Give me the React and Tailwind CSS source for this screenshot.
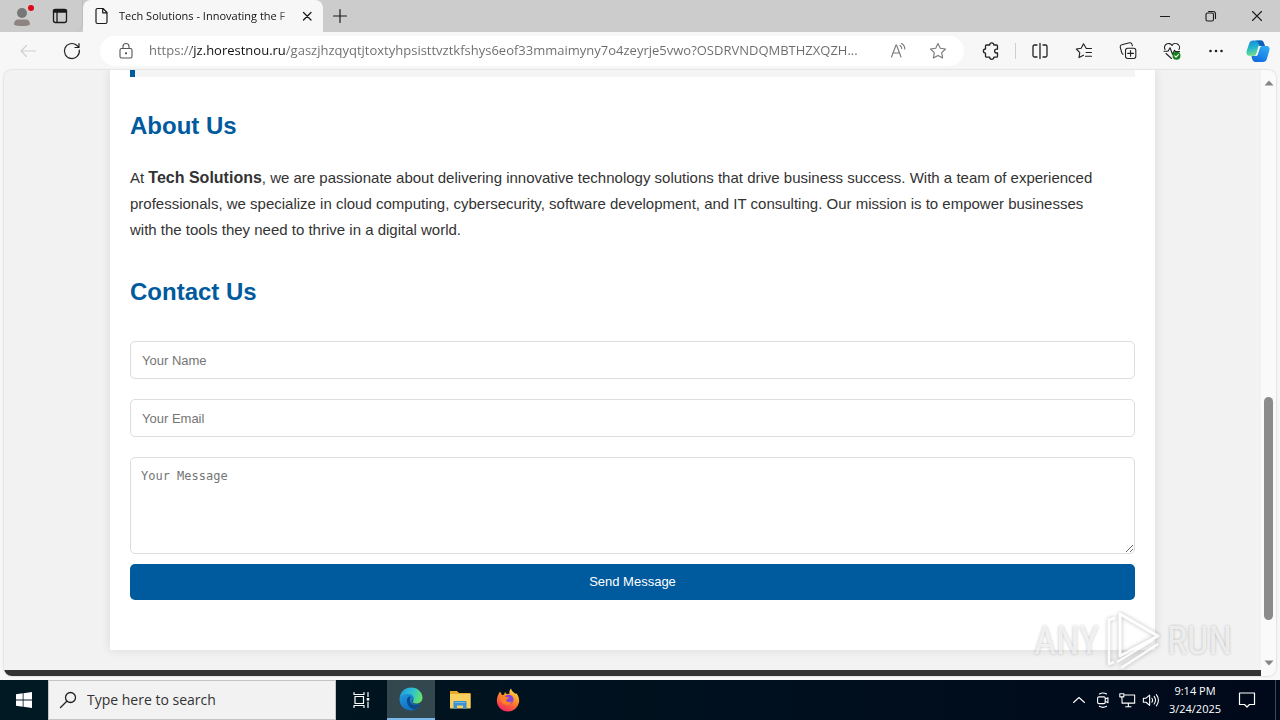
import React from "react";

function Icon({ children, className = "size-5", box = "0 0 20 20", sw = 1.1 }) {
  return (
    <svg viewBox={box} className={className} fill="none" stroke="currentColor" strokeWidth={sw} strokeLinecap="round" strokeLinejoin="round" aria-hidden="true">
      {children}
    </svg>
  );
}

function IconButton({ label, className = "", children }) {
  return (
    <button type="button" aria-label={label} className={`flex shrink-0 items-center justify-center ${className}`}>
      {children}
    </button>
  );
}

function TitleBar() {
  return (
    <header className="flex h-8 shrink-0 bg-[#cccccc] text-[#1b1b1b]">
      <div className="flex w-[83px] shrink-0 items-center rounded-br-lg border-r border-[#bdbdbd]">
        <IconButton label="Profile" className="ml-3 size-5">
          <svg viewBox="0 0 20 24" className="h-6 w-5 overflow-visible" aria-hidden="true">
            <circle cx="10" cy="9" r="5" fill="#777" />
            <path d="M2 20.500c0-3.500 2-5 4-5h8c2 0 4 1.500 4 5-2 2-14 2-16 0Z" fill="#8e8583" />
            <circle cx="19" cy="4" r="3" fill="#dc0a16" />
          </svg>
        </IconButton>
        <IconButton label="Tab actions" className="ml-[18px] size-5">
          <Icon sw={1.3}>
            <rect x="3.500" y="3.500" width="13" height="13" rx="2" />
            <path d="M3.500 6h13M7 6v10" />
            <path d="M4 4.800h12" strokeWidth="2.400" />
          </Icon>
        </IconButton>
      </div>
      <div className="flex w-60 shrink-0 items-center rounded-t-lg bg-[#f7f7f7] pl-[9px] pr-1.5">
        <Icon className="size-5" sw={1.2}>
          <path d="M5.500 2.500h5.500l4 4v9.500a1.500 1.500 0 0 1-1.500 1.500h-8A1.500 1.500 0 0 1 4 16V4a1.500 1.500 0 0 1 1.500-1.500ZM10.700 2.800v4h4" />
        </Icon>
        <span className="ml-[7px] min-w-0 flex-1 whitespace-nowrap bg-linear-to-r from-[#111] from-90% to-[#ccc] bg-clip-text text-[11px] text-transparent">
          Tech Solutions - Innovating the F
        </span>
        <IconButton label="Close tab" className="ml-1 size-5">
          <Icon sw={1.3}><path d="m6.500 6.500 7.500 7.500M14 6.500 6.500 14" /></Icon>
        </IconButton>
      </div>
      <IconButton label="New tab" className="w-[34px]">
        <Icon sw={1.2}><path d="M10 3.500v13M3.500 10h13" /></Icon>
      </IconButton>
      <div className="flex-1" />
      <IconButton label="Minimize" className="w-[46px]">
        <Icon><path d="M5.500 10.500h9" /></Icon>
      </IconButton>
      <IconButton label="Restore" className="w-[46px]">
        <Icon><rect x="5" y="7" width="7.500" height="8" rx="1.500" /><path d="M7.500 5.500H12a2.500 2.500 0 0 1 2.500 2.500v4.500" /></Icon>
      </IconButton>
      <IconButton label="Close" className="w-[46px]">
        <Icon><path d="m5.500 5.500 9 9M14.500 5.500l-9 9" /></Icon>
      </IconButton>
    </header>
  );
}

function Toolbar() {
  return (
    <nav className="flex h-[38px] shrink-0 items-center bg-[#f7f7f7] text-[#222]">
      <IconButton label="Back" className="ml-[18px] size-5 text-[#cfcfcf]">
        <Icon><path d="M17.500 10H3M8.500 4.500 3 10l5.500 5.500" /></Icon>
      </IconButton>
      <IconButton label="Refresh" className="ml-6 size-5">
        <Icon sw={1.2}><path d="M17.300 9A7.500 7.500 0 1 1 14.700 4.300l2 1.800M17 2.500v4h-4" /></Icon>
      </IconButton>
      <div className="ml-[18px] flex h-[30px] min-w-0 flex-1 items-center rounded-full bg-white pl-4 pr-4">
        <Icon className="size-5 shrink-0 text-[#555]">
          <rect x="4" y="7.500" width="12" height="9.500" rx="1.500" />
          <path d="M7 7.500V5.500a3 3 0 0 1 6 0v2" />
          <circle cx="10" cy="12.300" r=".6" fill="currentColor" />
        </Icon>
        <input
          aria-label="Address"
          type="text"
          defaultValue="https://jz.horestnou.ru/gaszjhzqyqtjtoxtyhpsisttvztkfshys6eof33mmaimyny7o4zeyrje5vwo?OSDRVNDQMBTHZXQZH..."
          className="ml-[13px] min-w-0 flex-1 bg-[linear-gradient(90deg,#6b6b6b_43px,#111_43px,#111_137px,#6b6b6b_137px)] bg-clip-text text-[13px] text-transparent outline-none"
        />
        <IconButton label="Read aloud" className="ml-[18px] size-5 text-[#777]">
          <Icon><path d="m3.500 16 4.500-12h.5L13 16M5 12h6.500M12 4.500c1 .6 1.700 1.800 1.700 3M13.500 2.500c2 1 3.300 3 3.300 5.500" /></Icon>
        </IconButton>
        <IconButton label="Add to favorites" className="ml-5 size-5 text-[#777]">
          <Icon><path d="m10 2.500 2.300 4.800 5.200.7-3.800 3.700.9 5.200L10 14.400l-4.600 2.500.9-5.200L2.500 8l5.200-.7Z" /></Icon>
        </IconButton>
      </div>
      <IconButton label="Extensions" className="ml-[17px] size-5">
        <Icon sw={1.3}><path d="M5.500 4h3.200a2.100 2.100 0 0 1 4.200 0h2.600a1 1 0 0 1 1 1v3.200h-1a1.900 1.900 0 0 0 0 3.800h1v3.200a1 1 0 0 1-1 1h-2.600a2.100 2.100 0 0 1-4.200 0H5.500a1 1 0 0 1-1-1V12.200a2.100 2.100 0 0 1 0-4.200V5a1 1 0 0 1 1-1Z" /></Icon>
      </IconButton>
      <div className="ml-[14px] h-4 w-px bg-[#cfcfcf]" />
      <IconButton label="Split screen" className="ml-[14px] size-5">
        <Icon sw={1.3}><path d="M10 2.500v15M7 4H4.500A1.500 1.500 0 0 0 3 5.500v9A1.500 1.500 0 0 0 4.500 16H7M13 4h2.500A1.500 1.500 0 0 1 17 5.500v9a1.500 1.500 0 0 1-1.500 1.500H13" /></Icon>
      </IconButton>
      <IconButton label="Favorites" className="ml-6 size-5">
        <Icon><path d="M17.500 7.500h-5.200L9.500 2.800 7.200 7.300l-4.900.7 3.500 3.600-.8 5 4.500-2.400M12 11.500h5.500M11.500 15.300h6" /></Icon>
      </IconButton>
      <IconButton label="Collections" className="ml-6 size-5">
        <Icon><rect x="7.500" y="7.200" width="10.300" height="10.300" rx="2.200" /><path d="M12.600 9.500v5.800M9.700 12.400h5.800M5 13.300a2.500 2.500 0 0 1-1.300-1.600L2.300 6.300a2 2 0 0 1 1.500-2.500l7.700-2a2 2 0 0 1 2.400 1.400l.5 1.600" /></Icon>
      </IconButton>
      <IconButton label="Browser essentials" className="ml-6 size-5">
        <Icon>
          <path d="M3 8.500a4 4 0 0 1 7-4 4 4 0 0 1 7 4M4 12.500l5.500 5M2 10.300h4l2-3.500 2.500 6.500 2-4 1 1.300h4" />
          <circle cx="14.500" cy="14.700" r="4" fill="#16801d" stroke="none" />
          <path d="m12.700 14.900 1.300 1.200 2.400-2.500" stroke="white" />
        </Icon>
      </IconButton>
      <IconButton label="More" className="ml-6 size-5">
        <Icon><g fill="currentColor" stroke="none"><circle cx="4.500" cy="10" r="1.300" /><circle cx="10" cy="10" r="1.300" /><circle cx="15.500" cy="10" r="1.300" /></g></Icon>
      </IconButton>
      <IconButton label="Copilot" className="ml-5 mr-[10px] size-6">
        <svg viewBox="0 0 24 24" className="size-6" aria-hidden="true">
          <defs>
            <linearGradient id="cpA" x1="0" y1="0" x2=".2" y2="1"><stop offset="0" stopColor="#1a86d9" /><stop offset=".5" stopColor="#22b5cf" /><stop offset="1" stopColor="#6fdc8c" /></linearGradient>
            <linearGradient id="cpB" x1=".7" y1="0" x2=".2" y2="1"><stop offset="0" stopColor="#2fa8f4" /><stop offset=".5" stopColor="#1f8aec" /><stop offset="1" stopColor="#1268dc" /></linearGradient>
          </defs>
          <path d="M17 23H9.500c-2 0-2.800-1.500-3.300-3l-.8-3.200H8c2 0 3-1 3.500-3l1.200-4c.6-2 1.500-2.800 3.500-2.800h4.300c3 0 3.500 2.500 2.700 5l-2.400 8c-.8 2.200-1.800 3-3.800 3Z" fill="url(#cpB)" />
          <path d="M7 1.500h8c2 0 2.500 1.500 3 3L19 7h-3c-2 0-3 1-3.500 3l-1 4c-.7 2-1.500 2.800-3.500 2.800H3.500C.5 16.800 0 14 .8 11.500l2.400-7C4 2.300 5 1.500 7 1.500Z" fill="url(#cpA)" />
          <path d="M9 1.500h6c2 0 2.500 1.500 3 3L19 7h-3c-1.500 0-2.500-.2-3-1.500-.7-2-2-4-4-4Z" fill="#135fb8" />
          <path d="M12.500 7H16c-1.200.2-1.800 1-2.300 2.500l-1.700 5.500c-.5 1.500-1.300 2-2.500 2H8c1.300-.2 2-1 2.400-2.400Z" fill="white" />
        </svg>
      </IconButton>
    </nav>
  );
}

function Page() {
  return (
    <div className="flex min-w-0 flex-1 flex-col overflow-hidden bg-[#f2f2f2] font-['Liberation_Sans',Arial,sans-serif] text-[#333]">
      <main className="mx-[106px] bg-white px-5 pb-[50px] shadow-[0_0_10px_rgba(0,0,0,0.1)]">
        <div className="h-[7px] border-l-[5px] border-[#005a9e] bg-[#f4f4f4]" />
        <section className="pt-[30px]">
          <h2 className="text-2xl leading-[38px] font-bold text-[#005a9e]">About Us</h2>
          <p className="mt-5 text-[15px] leading-[26px]">
            At <strong className="text-base leading-[26px]">Tech Solutions</strong>, we are passionate about delivering innovative technology solutions that drive business success. With a team of experienced{" "}
            <br />
            professionals, we specialize in cloud computing, cybersecurity, software development, and IT consulting. Our mission is to empower businesses{" "}
            <br />
            with the tools they need to thrive in a digital world.
          </p>
        </section>
        <section className="pt-[30px]">
          <h2 className="text-2xl leading-[38px] font-bold text-[#005a9e]">Contact Us</h2>
          <form className="mt-[30px] flex flex-col text-[13px]" onSubmit={(e) => e.preventDefault()}>
            <input aria-label="Your Name" type="text" placeholder="Your Name" className="h-[38px] rounded-[5px] border border-[#ddd] px-[11px] placeholder:text-[#757575]" />
            <input aria-label="Your Email" type="email" placeholder="Your Email" className="mt-5 h-[38px] rounded-[5px] border border-[#ddd] px-[11px] placeholder:text-[#757575]" />
            <textarea aria-label="Your Message" placeholder="Your Message" className="mt-5 h-[97px] rounded-[5px] border border-[#ddd] px-[10px] py-[10px] font-['DejaVu_Sans_Mono',monospace] text-xs placeholder:text-[#757575]" />
            <button type="submit" className="mt-[10px] h-9 rounded-[5px] bg-[#005a9e] text-white">Send Message</button>
          </form>
        </section>
      </main>
      <footer className="mt-5 h-10 shrink-0 bg-[#333]" />
    </div>
  );
}

function ScrollBar() {
  return (
    <div className="flex w-[15px] shrink-0 flex-col items-center bg-[#fafafa] py-2" aria-hidden="true">
      <svg viewBox="0 0 10 10" className="size-[10px]" fill="#858585"><path d="M5 2.500 9.500 7.500h-9Z" /></svg>
      <div className="flex min-h-0 w-full flex-1 flex-col items-center pt-[309px] pb-[38px]">
        <div className="w-[9px] flex-1 rounded-full bg-[#8b8b8b]" />
      </div>
      <svg viewBox="0 0 10 10" className="size-[10px]" fill="#858585"><path d="M5 7.500 .5 2.500h9Z" /></svg>
    </div>
  );
}

function Watermark() {
  return (
    <div className="pointer-events-none absolute right-12 bottom-12 flex h-[62px] items-center gap-1.5 font-['Liberation_Sans_Narrow','Roboto_Condensed',Roboto,sans-serif] text-[38px] text-white/70 [text-shadow:0_0_3px_rgba(0,0,0,0.25)]">
      <span>ANY</span>
      <svg viewBox="0 0 56 62" className="h-[62px] w-14 overflow-visible opacity-80 drop-shadow-[0_0_2px_rgba(0,0,0,0.35)]" fill="none" stroke="white" strokeWidth="3" strokeLinejoin="round" aria-hidden="true">
        <path d="M15 4v42L53 26Z" />
        <path d="M10 8 4 10v44l5-2M16 58l37-24M12 52l36-22" strokeWidth="2.500" />
      </svg>
      <span>RUN</span>
    </div>
  );
}

function Taskbar() {
  return (
    <footer className="flex h-10 shrink-0 bg-linear-to-r from-[#001922] to-[#00091a] text-white">
      <IconButton label="Start" className="w-12">
        <svg viewBox="0 0 16 16" className="size-4" fill="white" aria-hidden="true"><path d="M0 2.200 6.700 1.300v6.300H0ZM7.500 1.200 16 0v7.600H7.500ZM0 8.400h6.700v6.400L0 13.800ZM7.500 8.400H16V16l-8.500-1.200Z" /></svg>
      </IconButton>
      <label className="flex w-72 shrink-0 items-center border border-[#c4c4c4] bg-[#f2f2f2] pl-[9px] text-[#222]">
        <Icon sw={1.3}><circle cx="12.500" cy="7.500" r="5" /><path d="m8.800 11.200-6.300 6.300" /></Icon>
        <input type="search" aria-label="Search" placeholder="Type here to search" className="ml-[9px] min-w-0 flex-1 text-sm outline-none placeholder:text-[#333]" />
      </label>
      <IconButton label="Task view" className="w-[51px]">
        <Icon className="size-5" sw={1.2}><path d="M2 2.500v2h10v-2M2 17.500v-2h10v2M3 6.500h8.500v7H3ZM16 2.500v4M16 12v5.500" /><path d="M16 8v2.500" strokeWidth="2.500" strokeLinecap="butt" /></Icon>
      </IconButton>
      <IconButton label="Microsoft Edge" className="w-12 border-b-2 border-[#79b9ea] bg-[#33474e]">
        <svg viewBox="0 0 24 24" className="size-6" aria-hidden="true">
          <defs>
            <linearGradient id="edA" x1="0" y1=".2" x2="1" y2=".5"><stop offset="0" stopColor="#2498df" /><stop offset=".5" stopColor="#2bc0d4" /><stop offset="1" stopColor="#65e26b" /></linearGradient>
            <linearGradient id="edB" x1="0" y1="0" x2=".8" y2="1"><stop offset="0" stopColor="#219bdc" /><stop offset="1" stopColor="#0b66c0" /></linearGradient>
          </defs>
          <path d="M.5 12C.5 7 5 6 10 6c4 0 6 2 5.500 4.500L13 14c0 3 5 5 8.500 3C19.500 21 16 23.500 12 23.500 5.500 23.500.5 18.500.5 12Z" fill="url(#edB)" />
          <path d="M.6 11C1.500 4.500 6 .5 12 .5c7 0 11.500 5 11.500 10 0 4-3 6-6.500 6-2.500 0-4-1-3-2.500 1.500-2.500.5-7-4-7-5 0-8.500 1.500-9.400 3.500Z" fill="url(#edA)" />
          <path d="M8.500 11c-2 5 1.500 10 6.500 11.500 3-1 5.500-3 6.500-5.500-6 3-12 0-10.500-5.500.5-1.500 1-2 1-2-1.500-.3-3 .2-3.500 1.500Z" fill="#0c4a8a" />
        </svg>
      </IconButton>
      <IconButton label="File Explorer" className="w-[49px]">
        <svg viewBox="0 0 22 20" className="h-5 w-[22px]" aria-hidden="true">
          <path d="M1 1h7l2 2h11.500V18H1Z" fill="#e9a92b" />
          <path d="M1 4h20.500v14.500H1Z" fill="#f9cf60" />
          <path d="M4.500 19V12q0-1 1-1h11q1 0 1 1v7H14v-3.500H8V19Z" fill="#3c91d0" />
          <path d="M6 12.500h10" stroke="#71b9e6" />
        </svg>
      </IconButton>
      <IconButton label="Firefox" className="w-12">
        <svg viewBox="0 0 24 24" className="size-6" aria-hidden="true">
          <defs><linearGradient id="ff" x1=".8" y1="0" x2=".3" y2="1"><stop offset="0" stopColor="#ffe14a" /><stop offset=".45" stopColor="#ff8a26" /><stop offset="1" stopColor="#f4215e" /></linearGradient></defs>
          <path d="M4 3.500 6 7l2-.2L9 4l1.500 2 3-.3C13 3.500 14 1.500 15 .5c.5 2.500 3 4 4.500 5.500l.5-1c3 3 3.500 7 3 9.500A11.300 11.300 0 0 1 12 23.500C5.500 23.500.8 18.500.8 12.500.8 9 2.500 6 4 3.500Z" fill="url(#ff)" />
          <circle cx="12.700" cy="11.500" r="4.800" fill="#8546dd" />
          <path d="M5 8.500c2-1 4-.5 5 .5l3 .2c0 1.500-2.500 1.800-3 3 .5 2 4 2.500 6 1-1 4-7 5-10 1C4.500 12 4 10 5 8.500Z" fill="#ff8128" />
        </svg>
      </IconButton>
      <div className="flex-1" />
      <IconButton label="Show hidden icons" className="w-6"><Icon><path d="m4.500 12.500 5.500-5 5.500 5" /></Icon></IconButton>
      <IconButton label="Meet now" className="w-6"><Icon className="size-[18px]" sw={1.2}><rect x="4" y="6.500" width="8.500" height="7.500" rx="1.500" /><path d="m12.500 9 3-1.500v5.500l-3-1.500M6 3.300q4-2.300 8 0M6 17q4 2.300 8 0" /></Icon></IconButton>
      <IconButton label="Network" className="w-6"><Icon className="size-[18px]" sw={1.2}><path d="M7 4.500h11.500v9H4.500V9M8.500 17.500h6M11.500 13.500v4M2 3h4.500v3.500H2ZM4.300 6.500V9" /></Icon></IconButton>
      <IconButton label="Volume" className="w-6"><Icon className="size-[18px]" sw={1.2}><path d="M1.500 8v4.500h3l4 3.500V4.500L4.500 8ZM11 8q1.500 2.200 0 4.500M13.500 6q3 4.200 0 8.500M16 4q4.500 6.200 0 12.500" /></Icon></IconButton>
      <div className="flex w-16 flex-col justify-center text-center text-[11px] leading-[18px]">
        <span>9:14 PM</span>
        <span>3/24/2025</span>
      </div>
      <IconButton label="Notifications" className="w-10"><Icon sw={1.2}><path d="M2.500 3h15v11.500h-5L10 17l-2.500-2.500h-5Z" /></Icon></IconButton>
      <div className="ml-2 w-[5px] border-l border-[#3d4754]" />
    </footer>
  );
}

export default function App() {
  return (
    <div className="relative flex h-screen flex-col overflow-hidden bg-[#f7f7f7] font-['Open_Sans','Noto_Sans',sans-serif]">
      <TitleBar />
      <Toolbar />
      <div className="mx-1 mb-1 flex min-h-0 flex-1 overflow-hidden rounded-lg shadow-[0_0_2px_rgba(0,0,0,0.25)]">
        <Page />
        <ScrollBar />
      </div>
      <Taskbar />
      <Watermark />
    </div>
  );
}
